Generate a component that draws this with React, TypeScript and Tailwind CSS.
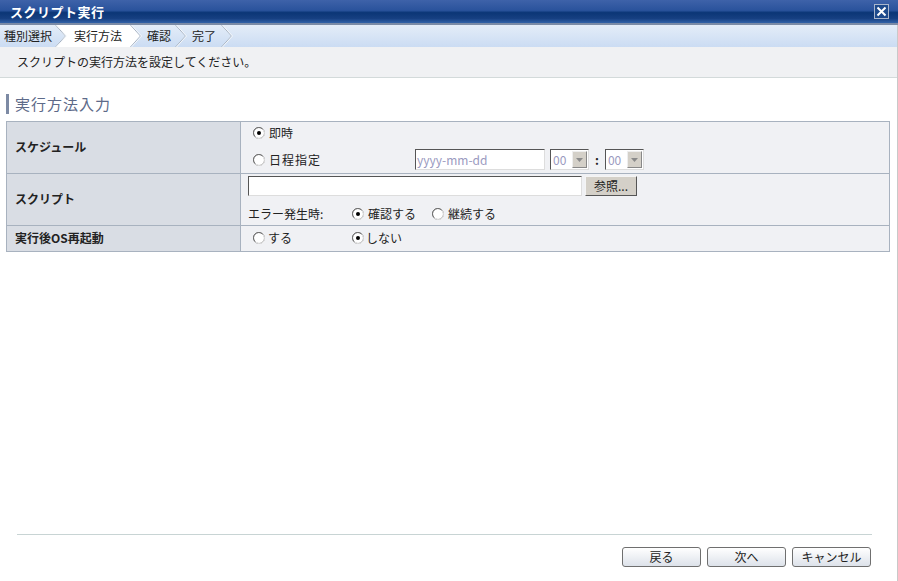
import React from "react";

const font = { fontFamily: '"Noto Sans CJK JP", "Liberation Sans", sans-serif' };

function Radio({ checked }: { checked?: boolean }) {
  return (
    <svg width="12" height="12" viewBox="0 0 12 12" className="shrink-0">
      <circle cx="6" cy="6" r="5.5" fill="#fff" stroke="#8c8c8c" />
      <path d="M2 9.5 A5 5 0 0 1 9.5 2" fill="none" stroke="#6e6e6e" strokeWidth="1" />
      <path d="M10 2.6 A5 5 0 0 1 2.6 10" fill="none" stroke="#e6e6e6" strokeWidth="1" />
      {checked && <circle cx="6" cy="6" r="2" fill="#000" />}
    </svg>
  );
}

function Sep({ mode }: { mode: "none" | "before" | "after" }) {
  return (
    <svg width="12" height="22" viewBox="0 0 12 22" className="shrink-0">
      {mode === "before" && <polygon points="0,0 12,0 12,22 0,22 10,11" fill="#fff" />}
      {mode === "after" && <polygon points="0,0 10,11 0,22" fill="#fff" />}
      <polyline points="0.5,0 10.5,11 0.5,22" fill="none" stroke="#a9b4c2" strokeWidth="1" />
      <polyline points="1.5,0 11.5,11 1.5,22" fill="none" stroke="#f4f7fb" strokeWidth="1" />
    </svg>
  );
}

function Select() {
  return (
    <div className="flex h-[21px] w-[39px] items-center border border-t-[#555] border-l-[#555] border-r-[#ddd] border-b-[#ddd] bg-white">
      <span className="flex-1 pl-[2px] text-[12px] text-[#9a9ac0]">00</span>
      <div className="mr-[1px] flex h-[17px] w-[15px] items-center justify-center border border-[#eee] border-r-[#888] border-b-[#888] bg-[#d4d0c8]">
        <svg width="7" height="4" viewBox="0 0 7 4">
          <polygon points="0,0 7,0 3.5,4" fill="#8a8a8a" />
        </svg>
      </div>
    </div>
  );
}

function Btn({ children }: { children: React.ReactNode }) {
  return (
    <button className="flex h-[20px] w-[79px] items-center justify-center rounded-[3px] border border-[#6f6f6f] bg-gradient-to-b from-[#ffffff] to-[#dde2ea] text-[12px] text-[#222]">
      {children}
    </button>
  );
}

export default function App() {
  return (
    <div className="flex h-[581px] w-[898px] flex-col overflow-hidden bg-white text-[12px] text-[#222]" style={font}>
      {/* title bar */}
      <div className="flex h-[23px] shrink-0 items-center justify-between bg-[linear-gradient(to_bottom,#3e62a9_0%,#2a539c_45%,#0b3676_55%,#163f81_80%,#3262a8_100%)] pl-[10px] pr-[9px]">
        <span className="text-[13px] font-bold tracking-[0.5px] text-white">スクリプト実行</span>
        <div className="flex h-[15px] w-[15px] items-center justify-center border border-[#aab6cc] bg-[#1e4a8c]">
          <svg width="11" height="11" viewBox="0 0 11 11">
            <path d="M1.5 1.5 L9.5 9.5 M9.5 1.5 L1.5 9.5" stroke="#fff" strokeWidth="2" />
          </svg>
        </div>
      </div>
      <div className="h-[2px] shrink-0 bg-[#7b8ba6]" />
      <div className="flex min-h-0 flex-1 flex-col border-r border-[#c9c9c9]">
        {/* breadcrumb */}
        <div className="flex h-[22px] shrink-0 items-center bg-gradient-to-b from-[#e4edf8] to-[#cbdcf3]">
          <span className="pl-[4px] pr-[3px]">種別選択</span>
          <Sep mode="before" />
          <span className="flex h-[22px] items-center bg-white pl-[7px] pr-[8px]">実行方法</span>
          <Sep mode="after" />
          <span className="pl-[5px] pr-[4px]">確認</span>
          <Sep mode="none" />
          <span className="pl-[5px] pr-[5px]">完了</span>
          <Sep mode="none" />
        </div>
        {/* description */}
        <div className="flex h-[31px] shrink-0 items-center border-b border-[#d3dada] bg-[#f0f1f3] pl-[17px]">
          スクリプトの実行方法を設定してください。
        </div>
        {/* heading */}
        <div className="mt-[15px] flex items-center pl-[6px]">
          <div className="h-[20px] w-[3px] bg-[#7d8aa4]" />
          <span className="pl-[6px] text-[15px] tracking-[1px] text-[#5d6a89]">実行方法入力</span>
        </div>
        {/* table */}
        <div className="ml-[6px] mr-[7px] mt-[5px] border border-[#a8b2bf]">
          <div className="flex h-[52px] border-b border-[#a8b2bf]">
            <div className="flex w-[234px] items-center border-r border-[#a8b2bf] bg-[#d9dde4] pl-[8px] font-bold">スケジュール</div>
            <div className="flex flex-1 flex-col justify-center gap-[7px] bg-[#f0f1f4] pl-[12px]">
              <div className="flex items-center gap-[4px]">
                <Radio checked />
                <span>即時</span>
              </div>
              <div className="flex items-center">
                <div className="flex w-[162px] items-center gap-[4px]">
                  <Radio />
                  <span className="tracking-[1px]">日程指定</span>
                </div>
                <div className="flex h-[21px] w-[130px] items-center border border-t-[#555] border-l-[#555] border-r-[#ddd] border-b-[#ddd] bg-white pl-[1px] text-[#9a9ac0]">
                  yyyy-mm-dd
                </div>
                <div className="ml-[5px]"><Select /></div>
                <span className="mx-[6px] font-bold">:</span>
                <Select />
              </div>
            </div>
          </div>
          <div className="flex h-[52px] border-b border-[#a8b2bf]">
            <div className="flex w-[234px] items-center border-r border-[#a8b2bf] bg-[#d9dde4] pl-[8px] font-bold">スクリプト</div>
            <div className="flex flex-1 flex-col justify-center gap-[9px] bg-[#f0f1f4] pl-[7px]">
              <div className="flex items-center gap-[3px]">
                <div className="h-[20px] w-[334px] border border-t-[#555] border-l-[#555] border-r-[#ddd] border-b-[#ddd] bg-white" />
                <div className="flex h-[20px] w-[52px] items-center justify-center border border-[#f4f4f4] border-r-[#555] border-b-[#555] bg-[#d4d0c8]">参照...</div>
              </div>
              <div className="flex items-center">
                <span className="w-[104px]">エラー発生時:</span>
                <div className="flex w-[80px] items-center gap-[4px]">
                  <Radio checked />
                  <span>確認する</span>
                </div>
                <div className="flex items-center gap-[4px]">
                  <Radio />
                  <span>継続する</span>
                </div>
              </div>
            </div>
          </div>
          <div className="flex h-[25px]">
            <div className="flex w-[234px] items-center border-r border-[#a8b2bf] bg-[#d9dde4] pl-[8px] font-bold">実行後OS再起動</div>
            <div className="flex flex-1 items-center bg-[#f0f1f4] pl-[12px]">
              <div className="flex w-[99px] items-center gap-[3px]">
                <Radio />
                <span>する</span>
              </div>
              <div className="flex items-center gap-[2px]">
                <Radio checked />
                <span>しない</span>
              </div>
            </div>
          </div>
        </div>
        <div className="flex-1" />
        {/* footer */}
        <div className="ml-[17px] mr-[25px] h-[1px] bg-[#c8d4d4]" />
        <div className="flex justify-end gap-[6px] pr-[26px] pt-[12px] pb-[14px]">
          <Btn>戻る</Btn>
          <Btn>次へ</Btn>
          <Btn>キャンセル</Btn>
        </div>
      </div>
    </div>
  );
}
